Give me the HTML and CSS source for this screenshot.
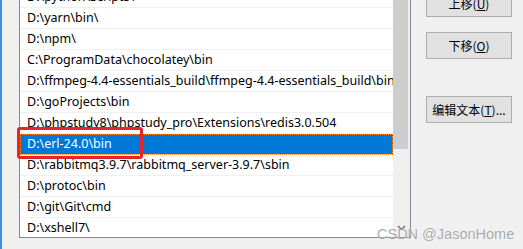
FILE: index.html
```html
<!DOCTYPE html>
<html lang="zh-CN">
<head>
    <meta charset="UTF-8">
    <title>编辑环境变量</title>
    <link rel="stylesheet" href="styles.css">
</head>
<body>
    <div class="window">
        <div class="edge"></div>

        <div class="listbox">
            <div class="rows">
                <div class="row">D:\python\Scripts\</div>
                <div class="row">D:\yarn\bin\</div>
                <div class="row">D:\npm\</div>
                <div class="row">C:\ProgramData\chocolatey\bin</div>
                <div class="row">D:\ffmpeg-4.4-essentials_build\ffmpeg-4.4-essentials_build\bin</div>
                <div class="row">D:\goProjects\bin</div>
                <div class="row">D:\phpstudy8\phpstudy_pro\Extensions\redis3.0.504</div>
                <div class="row selected">D:\erl-24.0\bin</div>
                <div class="row">D:\rabbitmq3.9.7\rabbitmq_server-3.9.7\sbin</div>
                <div class="row">D:\protoc\bin</div>
                <div class="row">D:\git\Git\cmd</div>
                <div class="row">D:\xshell7\</div>
            </div>
            <div class="scrollbar">
                <div class="thumb"></div>
                <div class="arrow">
                    <svg width="17" height="17" viewBox="0 0 17 17">
                        <path d="M5 7 L8.5 10.5 L12 7" fill="none" stroke="#606060" stroke-width="1.2"/>
                    </svg>
                </div>
            </div>
        </div>

        <div class="buttons">
            <button class="btn">上移(<u>U</u>)</button>
            <button class="btn down">下移(<u>O</u>)</button>
            <button class="btn edit">编辑文本(<u>T</u>)...</button>
        </div>

        <div class="highlight"></div>
        <div class="watermark">CSDN @JasonHome</div>
    </div>
</body>
</html>
```

FILE: styles.css
```css
body {
    margin: 0;
    background: #f0f0f0;
    font-family: "Noto Sans", "Noto Sans CJK SC", sans-serif;
}
.window {
    position: relative;
    display: flex;
    align-items: flex-start;
    height: 249px;
    overflow: hidden;
}
.edge {
    flex-shrink: 0;
    width: 2px;
    height: 249px;
    background: #3a8ee6;
}
.listbox {
    flex-shrink: 0;
    display: flex;
    box-sizing: border-box;
    width: 392px;
    height: 252px;
    margin-left: 17px;
    margin-top: -14px;
    border: 1px solid #828790;
    background: #fff;
    overflow: hidden;
}
.rows {
    flex: 1;
    min-width: 0;
}
.row {
    height: 20px;
    line-height: 20px;
    padding-left: 7px;
    border-bottom: 1px solid #f0f0f0;
    font-size: 12.5px;
    color: #000;
    white-space: nowrap;
    overflow: hidden;
}
.row.selected {
    background: #0078d7;
    color: #fff;
    outline: 1px dotted #ff8a28;
    outline-offset: -1px;
}
.scrollbar {
    width: 17px;
    display: flex;
    flex-direction: column;
    justify-content: space-between;
    background: #f0f0f0;
}
.thumb {
    width: 15px;
    height: 162px;
    background: #cdcdcd;
}
.arrow {
    height: 17px;
    margin-bottom: 1px;
}
.arrow svg {
    display: block;
}
.buttons {
    flex-shrink: 0;
    display: flex;
    flex-direction: column;
    margin-left: 15px;
    margin-top: -10px;
}
.btn {
    box-sizing: border-box;
    width: 86px;
    height: 27px;
    padding: 0;
    background: #e1e1e1;
    border: 1px solid #adadad;
    font-family: "Noto Sans CJK SC", sans-serif;
    font-size: 12px;
    color: #000;
}
.btn.down {
    margin-top: 15px;
}
.btn.edit {
    margin-top: 37px;
}
.highlight {
    position: absolute;
    left: 17px;
    top: 127px;
    box-sizing: border-box;
    width: 126px;
    height: 32px;
    border: 3px solid #e4262b;
    border-radius: 3px;
}
.watermark {
    position: absolute;
    left: 377px;
    top: 226px;
    font-family: "Liberation Sans", sans-serif;
    font-size: 14.5px;
    white-space: nowrap;
    color: rgba(130, 130, 130, 0.7);
    text-shadow: 0 0 1px #fff;
}
```
